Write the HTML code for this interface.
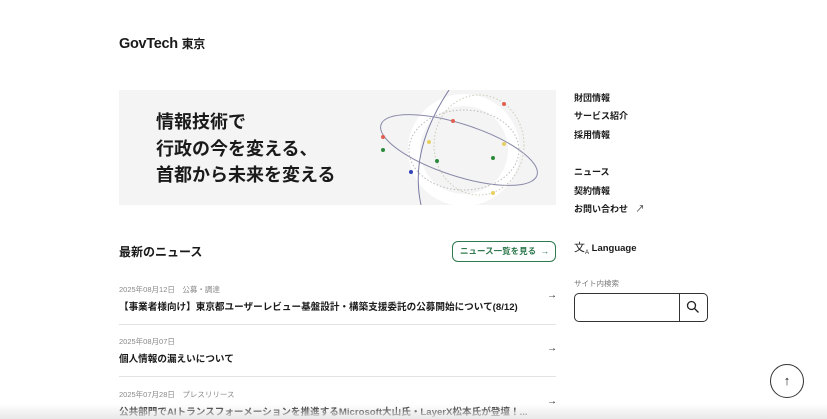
<!DOCTYPE html>
<html><head><meta charset="utf-8"><style>
*{margin:0;padding:0;box-sizing:border-box}
body{width:827px;height:419px;overflow:hidden;background:#fff;font-family:"Liberation Sans","Noto Sans CJK JP",sans-serif;color:#1a1a1a;position:relative}
.a{position:absolute;white-space:nowrap}
.b{font-weight:bold}
.nav{font-size:9px;font-weight:bold}
.date{font-size:7.5px;color:#888}
.tt{font-size:9.6px;font-weight:bold}
.sep{position:absolute;left:119px;width:437px;height:1px;background:#e3e3e3}
.arr{position:absolute;left:547px;font-size:10px}
</style></head><body>
<div class="a b" style="left:119px;top:35px;font-size:14.5px;letter-spacing:-0.3px">GovTech <span style="font-size:12px">東京</span></div>
<div class="a" style="left:119px;top:90px;width:437px;height:115px;background:#f4f4f5;overflow:hidden">
 <div class="a b" style="left:37px;top:19px;font-size:18px;line-height:26.5px">情報技術で<br>行政の今を変える、<br>首都から未来を変える</div>
 <svg class="a" style="left:250px;top:0" width="187" height="115" viewBox="0 0 187 115">
  <circle cx="95" cy="60" r="50" fill="none" stroke="#fff" stroke-width="12"/>
  <ellipse cx="90" cy="60" rx="82" ry="26" transform="rotate(18 90 60)" fill="none" stroke="#8a8aa8" stroke-width="1"/>
  <ellipse cx="95" cy="60" rx="55" ry="40" fill="none" stroke="#bbb" stroke-dasharray="1.5 2"/>
  <ellipse cx="110" cy="55" rx="45" ry="50" fill="none" stroke="#ccb" stroke-dasharray="1.5 2"/>
  <path d="M80 0 Q40 60 52 115" fill="none" stroke="#7a7aa0"/>
  <circle cx="84" cy="31" r="2" fill="#e06050"/><circle cx="60" cy="52" r="2" fill="#e8d060"/>
  <circle cx="135" cy="54" r="2" fill="#e8d060"/><circle cx="68" cy="71" r="2" fill="#2a8a3a"/>
  <circle cx="42" cy="82" r="2" fill="#3344bb"/><circle cx="124" cy="68" r="2" fill="#2a8a3a"/>
  <circle cx="14" cy="47" r="2" fill="#e06050"/><circle cx="14" cy="60" r="2" fill="#2a8a3a"/>
  <circle cx="135" cy="14" r="2" fill="#e06050"/><circle cx="124" cy="103" r="2" fill="#e8d060"/>
 </svg>
</div>
<div class="a b" style="left:119px;top:243px;font-size:12px">最新のニュース</div>
<div class="a b" style="left:452px;top:241px;width:104px;height:21px;border:1px solid #2f7a4f;border-radius:6px;color:#2f7a4f;font-size:8.5px;line-height:19px;padding-left:7px">ニュース一覧を見る &nbsp;→</div>
<div class="a date" style="left:119px;top:284px">2025年08月12日　公募・調達</div>
<div class="a tt" style="left:119px;top:299px">【事業者様向け】東京都ユーザーレビュー基盤設計・構築支援委託の公募開始について(8/12)</div>
<div class="arr" style="top:290px">→</div>
<div class="sep" style="top:324px"></div>
<div class="a date" style="left:119px;top:336px">2025年08月07日</div>
<div class="a tt" style="left:119px;top:351px">個人情報の漏えいについて</div>
<div class="arr" style="top:343px">→</div>
<div class="sep" style="top:376px"></div>
<div class="a date" style="left:119px;top:389px">2025年07月28日　プレスリリース</div>
<div class="a tt" style="left:119px;top:404px">公共部門でAIトランスフォーメーションを推進するMicrosoft大山氏・LayerX松本氏が登壇！...</div>
<div class="arr" style="top:396px">→</div>
<div class="a nav" style="left:574px;top:91px">財団情報</div>
<div class="a nav" style="left:574px;top:109px">サービス紹介</div>
<div class="a nav" style="left:574px;top:128px">採用情報</div>
<div class="a nav" style="left:574px;top:165px">ニュース</div>
<div class="a nav" style="left:574px;top:184px">契約情報</div>
<div class="a nav" style="left:574px;top:202px">お問い合わせ <span style="font-weight:normal;font-size:9px;margin-left:5px">↗</span></div>
<div class="a nav" style="left:574px;top:239px;font-size:9.5px"><span style="font-size:11px;font-weight:normal">文<sub style="font-size:6px">A</sub></span> Language</div>
<div class="a" style="left:574px;top:278px;font-size:7.5px;color:#777">サイト内検索</div>
<div class="a" style="left:574px;top:293px;width:134px;height:29px;border:1px solid #333;border-radius:5px"></div>
<div class="a" style="left:679px;top:294px;width:1px;height:27px;background:#333"></div>
<svg class="a" style="left:686px;top:300px" width="14" height="14" viewBox="0 0 14 14"><circle cx="5.5" cy="5.5" r="4" fill="none" stroke="#222" stroke-width="1.3"/><path d="M8.5 8.5L12.5 12.5" stroke="#222" stroke-width="1.3"/></svg>
<div class="a" style="left:770px;top:364px;width:34px;height:34px;border:1px solid #333;border-radius:50%;background:#fff;text-align:center;line-height:32px;font-size:13px">↑</div>
<div class="a" style="left:0;top:404px;width:827px;height:15px;background:linear-gradient(#fff0,#e8e8e8)"></div>
</body></html>
